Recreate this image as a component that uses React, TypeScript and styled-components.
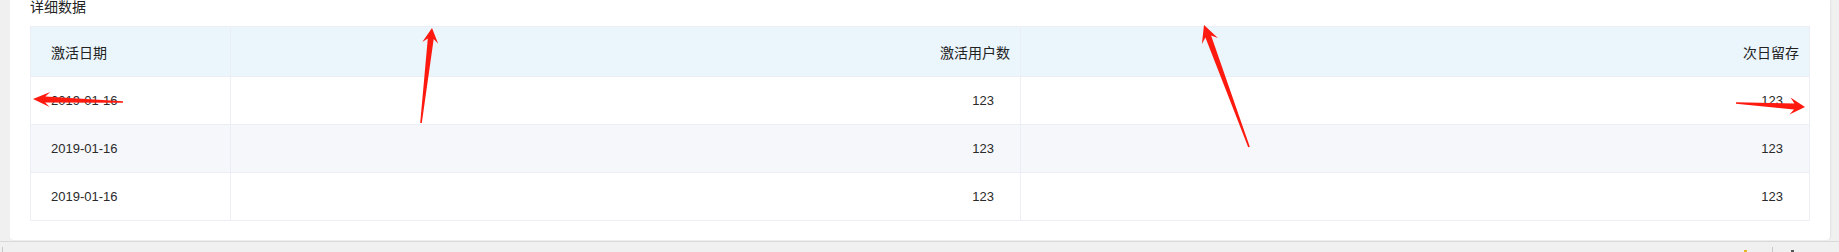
import styled, { createGlobalStyle } from "styled-components"

const GlobalStyle = createGlobalStyle`
  html, body {
    margin: 0;
    padding: 0;
    background: #f0f0f0;
    font-family: "Liberation Sans", "Noto Sans CJK SC", sans-serif;
    color: #303133;
  }
`

interface Row {
  date: string
  users: number
  retention: number
}

const rows: Row[] = [
  { date: "2019-01-16", users: 123, retention: 123 },
  { date: "2019-01-16", users: 123, retention: 123 },
  { date: "2019-01-16", users: 123, retention: 123 },
]

// annotation arrows drawn over the screenshot: tail, tip, head length, head half width
const arrows = [
  { tail: [123, 102], tip: [33, 99], head: 17, half: 7.5 },
  { tail: [421, 123], tip: [432, 28], head: 15, half: 8 },
  { tail: [1249, 147], tip: [1204, 25], head: 17, half: 8.5 },
  { tail: [1736, 103], tip: [1805, 107], head: 15, half: 8.5 },
]

function arrowPoints(a: (typeof arrows)[number]): string {
  const [tx, ty] = a.tail
  const [px, py] = a.tip
  const len = Math.hypot(px - tx, py - ty)
  const ux = (px - tx) / len
  const uy = (py - ty) / len
  const nx = -uy
  const ny = ux
  const bx = px - ux * a.head
  const by = py - uy * a.head
  const kx = px - ux * a.head * 0.72
  const ky = py - uy * a.head * 0.72
  const neck = 3
  const pts = [
    [tx + nx * 0.8, ty + ny * 0.8],
    [kx + nx * neck, ky + ny * neck],
    [bx + nx * a.half, by + ny * a.half],
    [px, py],
    [bx - nx * a.half, by - ny * a.half],
    [kx - nx * neck, ky - ny * neck],
    [tx - nx * 0.8, ty - ny * 0.8],
  ]
  return pts.map((p) => `${p[0].toFixed(1)},${p[1].toFixed(1)}`).join(" ")
}

export default function App() {
  return (
    <Page>
      <GlobalStyle />
      <Main>
        <Card>
          <Title>详细数据</Title>
          <Table>
            <HeadRow>
              <HeadCell>激活日期</HeadCell>
              <HeadCell $right>激活用户数</HeadCell>
              <HeadCell $right $last>次日留存</HeadCell>
            </HeadRow>
            {rows.map((row, i) => (
              <BodyRow key={i} $striped={i % 2 === 1}>
                <Cell>{row.date}</Cell>
                <Cell $right>{row.users}</Cell>
                <Cell $right $last>{row.retention}</Cell>
              </BodyRow>
            ))}
          </Table>
        </Card>
      </Main>
      <StatusBar>
        <Divider />
        <Spacer />
        <Mark $color="#e6b422" />
        <Divider />
        <Mark $color="#555" />
      </StatusBar>
      <Overlay width="1839" height="252" viewBox="0 0 1839 252">
        {arrows.map((a, i) => (
          <polygon key={i} points={arrowPoints(a)} fill="#ff1a10" />
        ))}
      </Overlay>
    </Page>
  )
}

const Page = styled.div`
  position: relative;
  width: 1839px;
  height: 252px;
  overflow: hidden;
  display: flex;
  flex-direction: column;
`

const Main = styled.div`
  display: flex;
  padding: 0 9px 1px 10px;
`

const Card = styled.div`
  flex: 1;
  height: 240px;
  box-sizing: border-box;
  background: #fff;
  border-radius: 0 0 4px 4px;
  box-shadow: 1px 0 2px rgba(0, 0, 0, 0.06);
  padding: 0 20px;
`

const Title = styled.div`
  font-family: "Noto Sans CJK SC", sans-serif;
  font-size: 14px;
  line-height: 14px;
  margin-top: -1px;
  margin-bottom: 13px;
  color: #222;
`

const Table = styled.div`
  border: 1px solid #ebeef5;
  border-bottom: none;
  font-size: 13px;
`

const HeadRow = styled.div`
  display: grid;
  grid-template-columns: 200px 790px 1fr;
  height: 50px;
  background: #eaf5fc;
`

const BodyRow = styled.div<{ $striped?: boolean }>`
  display: grid;
  grid-template-columns: 200px 790px 1fr;
  height: 48px;
  background: ${(p) => (p.$striped ? "#f5f7fa" : "#fff")};
`

const HeadCell = styled.div<{ $right?: boolean; $last?: boolean }>`
  box-sizing: border-box;
  display: flex;
  align-items: center;
  justify-content: ${(p) => (p.$right ? "flex-end" : "flex-start")};
  padding: ${(p) => (p.$right ? "0 10px 0 0" : "0 0 0 20px")};
  border-bottom: 1px solid #ebeef5;
  border-right: ${(p) => (p.$last ? "none" : "1px solid #ebeef5")};
  font-family: "Noto Sans CJK SC", sans-serif;
  font-size: 14px;
  color: #222;
`

const Cell = styled.div<{ $right?: boolean; $last?: boolean }>`
  box-sizing: border-box;
  display: flex;
  align-items: center;
  justify-content: ${(p) => (p.$right ? "flex-end" : "flex-start")};
  padding: ${(p) => (p.$right ? "0 26px 0 0" : "0 0 0 20px")};
  border-bottom: 1px solid #ebeef5;
  border-right: ${(p) => (p.$last ? "none" : "1px solid #ebeef5")};
  color: #2a2a2a;
`

const StatusBar = styled.div`
  flex: 1;
  display: flex;
  align-items: flex-end;
  border-top: 1px solid #d9d9d9;
  background: #f0f0f0;
  padding: 0 20px 0 2px;
`

const Spacer = styled.div`
  flex: 1;
`

const Divider = styled.div`
  width: 1px;
  height: 5px;
  background: #c8c8c8;
  margin: 0 18px 0 0;
`

const Mark = styled.div<{ $color: string }>`
  width: 3px;
  height: 2px;
  background: ${(p) => p.$color};
  margin-right: 25px;
`

const Overlay = styled.svg`
  position: absolute;
  top: 0;
  left: 0;
  pointer-events: none;
`
